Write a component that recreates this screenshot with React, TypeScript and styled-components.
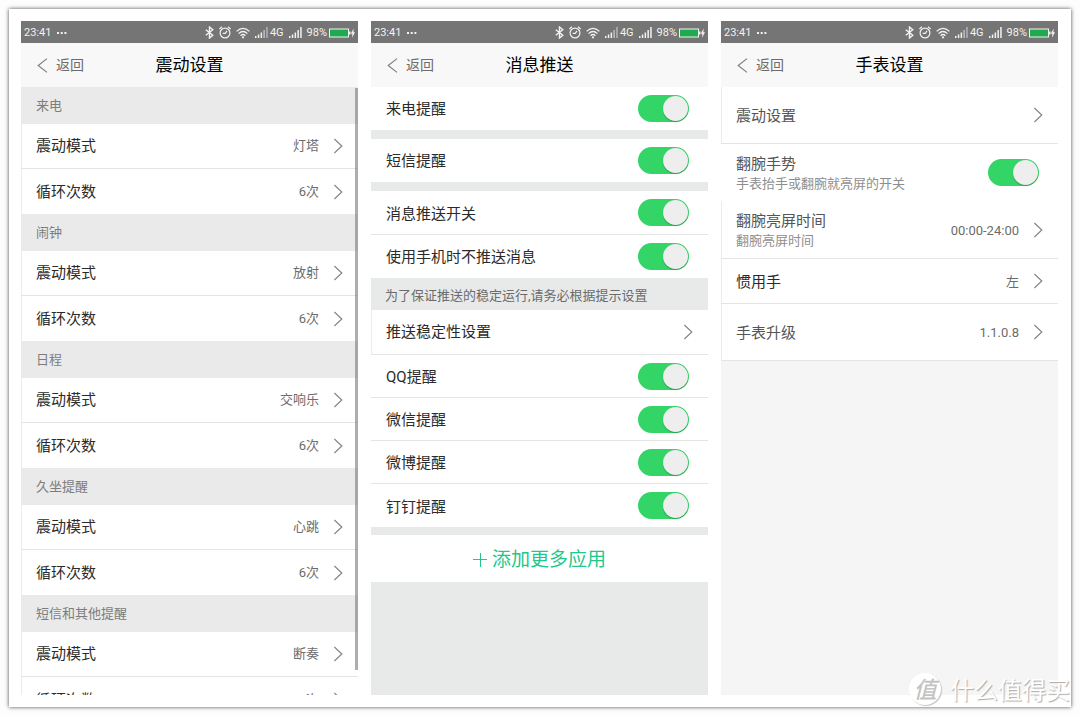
import React from "react";
import styled, { createGlobalStyle, css } from "styled-components";

const GlobalStyle = createGlobalStyle`
  *, *::before, *::after { box-sizing: border-box; }
  body {
    margin: 0;
    background: #fdfdfd;
    font-family: Roboto, "Noto Sans CJK SC", sans-serif;
    color: #2b2b2b;
  }
  button {
    font: inherit;
    color: inherit;
    background: none;
    border: 0;
    padding: 0;
    text-align: left;
    cursor: pointer;
  }
  h1, h2, p { margin: 0; font-weight: 400; }
`;

const Page = styled.div`
  height: 100vh;
  padding: 9px;
`;

const Frame = styled.div`
  position: relative;
  height: 100%;
  padding: 12px 13px 12px 12px;
  display: grid;
  grid-template-columns: repeat(3, minmax(0, 1fr));
  grid-template-rows: minmax(0, 1fr);
  gap: 13px;
  background: #fff;
  box-shadow: 0 0 4px rgba(0, 0, 0, 0.7);
`;

const Phone = styled.section<{ $bg: string }>`
  display: flex;
  flex-direction: column;
  min-height: 0;
  overflow: hidden;
  background: ${(p) => p.$bg};
`;

const StatusBarBox = styled.div`
  flex: none;
  display: flex;
  align-items: center;
  height: 22px;
  padding: 1px 3px 0 3px;
  background: #757575;
  color: #f2f2f2;
  font-size: 11px;
  line-height: 21px;
`;

const StatusIcons = styled.div`
  display: flex;
  align-items: center;
  gap: 5px;
  margin-left: auto;
`;

const Pair = styled.span<{ $gap: number }>`
  display: flex;
  align-items: center;
  gap: ${(p) => p.$gap}px;
`;

const Dots = styled.svg`
  margin-left: 6px;
`;

const HeaderBox = styled.header`
  flex: none;
  display: grid;
  grid-template-columns: 1fr auto 1fr;
  align-items: center;
  height: 44px;
  padding: 0 16px;
  background: #f8f8f8;
`;

const BackButton = styled.button`
  display: flex;
  align-items: center;
  gap: 8px;
  color: #6c6c6c;
  font-size: 14px;
  line-height: 20px;
`;

const Title = styled.h1`
  font-size: 17px;
  line-height: 24px;
  color: #000;
`;

const Body = styled.div`
  position: relative;
  flex: 1;
  min-height: 0;
  overflow: hidden;
`;

const ScrollThumb = styled.div`
  position: absolute;
  top: 1px;
  right: 0;
  bottom: 25px;
  width: 3px;
  background: rgba(130, 130, 130, 0.65);
`;

const SectionTitle = styled.h2`
  height: 37px;
  padding: 0 15px;
  background: #eaeaea;
  color: #7d7d7d;
  font-size: 13px;
  line-height: 37px;
`;

const Notice = styled.p`
  height: 32px;
  padding: 4px 14px 0;
  background: #e8eae9;
  color: #6b6b6b;
  font-size: 13px;
  line-height: 28px;
  white-space: nowrap;
`;

const Band = styled.div<{ $h: number }>`
  height: ${(p) => p.$h}px;
  background: #e8eae9;
`;

const rowBase = css<{ $h: number; $line?: boolean; $boxed?: boolean; $dim?: boolean }>`
  display: flex;
  align-items: center;
  width: 100%;
  height: ${(p) => p.$h}px;
  padding-left: ${(p) => (p.$boxed ? 14 : 15)}px;
  background: #fff;
  color: ${(p) => (p.$dim ? "#555" : "#2b2b2b")};
  border-bottom: ${(p) => (p.$line ? "1px solid #e4e4e4" : "0")};
  border-left: ${(p) => (p.$boxed ? "1px solid #ececec" : "0")};
  font-size: 15px;
  line-height: 20px;
`;

const LinkRowBox = styled.button`
  ${rowBase}
  padding-right: 15px;
`;

const SwitchRowBox = styled.label`
  ${rowBase}
  padding-right: 19px;
  cursor: pointer;
`;

const RowText = styled.span<{ $low?: boolean }>`
  flex: 1;
  display: flex;
  flex-direction: column;
  padding-top: ${(p) => (p.$low ? 2 : 0)}px;
`;

const Sub = styled.small`
  color: #8e8e8e;
  font-size: 13px;
  line-height: 19px;
`;

const Value = styled.span<{ $low?: boolean }>`
  margin-right: 15px;
  padding-top: ${(p) => (p.$low ? 2 : 0)}px;
  color: #6c6c6c;
  font-size: 13px;
`;

const Switch = styled.input`
  appearance: none;
  flex: none;
  display: flex;
  align-items: center;
  justify-content: flex-start;
  width: 51px;
  height: 27px;
  margin: 0;
  padding: 0 1px;
  border-radius: 14px;
  background: #ccc;
  cursor: pointer;

  &::before {
    content: "";
    width: 25px;
    height: 25px;
    border-radius: 50%;
    background: #eeeeee;
    box-shadow: 0 1px 1px rgba(0, 70, 20, 0.35);
  }

  &:checked {
    background: #32d566;
    justify-content: flex-end;
  }
`;

const AddButton = styled.button`
  display: flex;
  align-items: center;
  justify-content: center;
  gap: 5px;
  width: 100%;
  height: 47px;
  padding-top: 2px;
  background: #fff;
  color: #22c78c;
  font-size: 19px;
  line-height: 26px;
`;

const Watermark = styled.div`
  position: absolute;
  right: 1px;
  bottom: 2px;
  display: flex;
  align-items: center;
  gap: 9px;
  color: #fff;
  font-size: 24px;
  line-height: 32px;
  font-family: "Noto Sans CJK SC", sans-serif;
  text-shadow: 1px 1px 1px #aaa;
  pointer-events: none;
`;

const Seal = styled.span`
  width: 32px;
  height: 32px;
  border-radius: 50%;
  background: #fff;
  box-shadow: 1px 1px 1px #c4c4c4;
  color: #c4c4c4;
  font-size: 23px;
  font-style: italic;
  font-weight: 500;
  line-height: 31px;
  text-align: center;
  text-shadow: none;
`;

const Signal = ({ dim }: { dim?: boolean }) => (
  <svg width="13" height="12" viewBox="0 0 13 12" fill="#f2f2f2" aria-hidden="true">
    <rect x="0" y="9" width="1.5" height="2" />
    <rect x="2.8" y="7.5" width="1.5" height="3.5" />
    <rect x="5.6" y="5.5" width="1.5" height="5.5" />
    <rect x="8.4" y="3" width="1.5" height="8" opacity={dim ? 0.6 : 1} />
    <rect x="11.2" y="0" width="1.5" height="11" opacity={dim ? 0.5 : 1} />
  </svg>
);

const StatusBar = () => (
  <StatusBarBox>
    <span>23:41</span>
    <Dots width="10" height="2" viewBox="0 0 10 2" fill="#f2f2f2" aria-hidden="true">
      <rect x="0" width="2" height="2" />
      <rect x="3.7" width="2" height="2" />
      <rect x="7.4" width="2" height="2" />
    </Dots>
    <StatusIcons>
      <svg width="9" height="13" viewBox="0 0 9 13" fill="none" stroke="#f2f2f2" strokeWidth="1.4" aria-hidden="true">
        <path d="M0.8 3.7 L7.8 9.3 L4.5 12 V1 L7.8 3.7 L0.8 9.3" />
      </svg>
      <svg width="12" height="13" viewBox="0 0 12 13" fill="none" stroke="#f2f2f2" strokeWidth="1.2" aria-hidden="true">
        <circle cx="6" cy="7" r="4.9" />
        <path d="M0.4 3 L3 0.8 M11.6 3 L9 0.8 M8 4.8 L6.3 7.4 H3.7" />
      </svg>
      <svg width="14" height="12" viewBox="0 0 14 12" fill="none" stroke="#f2f2f2" strokeWidth="1.3" aria-hidden="true">
        <path d="M0.6 4.4 Q7 -1.6 13.4 4.4 M2.6 6.6 Q7 2.4 11.4 6.6 M4.6 8.7 Q7 6.4 9.4 8.7" />
        <circle cx="7" cy="10.3" r="1.1" fill="#f2f2f2" stroke="none" />
      </svg>
      <Pair $gap={2}>
        <Signal dim />
        <span>4G</span>
      </Pair>
      <Signal />
      <Pair $gap={2}>
        <span>98%</span>
        <svg width="26" height="10" viewBox="0 0 26 10" aria-hidden="true">
          <rect x="0.5" y="1" width="19" height="8" fill="#1faa50" stroke="#f2f2f2" />
          <rect x="20" y="3.5" width="1.5" height="3" fill="#f2f2f2" />
          <path d="M24.6 0.4 L21.8 5.8 H23.4 L23 9.8 L26 4.2 H24.4 Z" fill="#f2f2f2" />
        </svg>
      </Pair>
    </StatusIcons>
  </StatusBarBox>
);

const Header = ({ title }: { title: string }) => (
  <HeaderBox>
    <BackButton type="button">
      <svg width="11" height="15" viewBox="0 0 11 15" fill="none" stroke="#808080" strokeWidth="1.2" aria-hidden="true">
        <path d="M10 0.6 L1.2 7.5 L10 14.4" />
      </svg>
      返回
    </BackButton>
    <Title>{title}</Title>
  </HeaderBox>
);

const Chevron = () => (
  <svg width="9" height="16" viewBox="0 0 9 16" fill="none" stroke="#858585" strokeWidth="1.2" aria-hidden="true">
    <path d="M0.4 1 L7.8 8 L0.4 15" />
  </svg>
);

type RowProps = {
  label: string;
  sub?: string;
  value?: string;
  height: number;
  line?: boolean;
  boxed?: boolean;
  dim?: boolean;
  low?: boolean;
};

const LinkRow = ({ label, sub, value, height, line, boxed, dim, low }: RowProps) => (
  <LinkRowBox type="button" $h={height} $line={line} $boxed={boxed} $dim={dim}>
    <RowText $low={low}>
      {label}
      {sub && <Sub>{sub}</Sub>}
    </RowText>
    {value && <Value $low={low}>{value}</Value>}
    <Chevron />
  </LinkRowBox>
);

const SwitchRow = ({ label, sub, height, line, dim, low }: RowProps) => (
  <SwitchRowBox $h={height} $line={line} $dim={dim}>
    <RowText $low={low}>
      {label}
      {sub && <Sub>{sub}</Sub>}
    </RowText>
    <Switch type="checkbox" defaultChecked />
  </SwitchRowBox>
);

const vibration = [
  { name: "来电", mode: "灯塔", times: "6次" },
  { name: "闹钟", mode: "放射", times: "6次" },
  { name: "日程", mode: "交响乐", times: "6次" },
  { name: "久坐提醒", mode: "心跳", times: "6次" },
  { name: "短信和其他提醒", mode: "断奏", times: "8次" },
];

const apps = ["QQ提醒", "微信提醒", "微博提醒", "钉钉提醒"];

export default function App() {
  return (
    <>
      <GlobalStyle />
      <Page>
        <Frame>
          <Phone $bg="#fff">
            <StatusBar />
            <Header title="震动设置" />
            <Body>
              {vibration.map((v) => (
                <React.Fragment key={v.name}>
                  <SectionTitle>{v.name}</SectionTitle>
                  <LinkRow label="震动模式" value={v.mode} height={45} line boxed />
                  <LinkRow label="循环次数" value={v.times} height={45} boxed />
                </React.Fragment>
              ))}
              <ScrollThumb />
            </Body>
          </Phone>

          <Phone $bg="#e8eae9">
            <StatusBar />
            <Header title="消息推送" />
            <Body>
              <SwitchRow label="来电提醒" height={43} />
              <Band $h={9} />
              <SwitchRow label="短信提醒" height={43} />
              <Band $h={9} />
              <SwitchRow label="消息推送开关" height={44} line low />
              <SwitchRow label="使用手机时不推送消息" height={43} />
              <Notice>为了保证推送的稳定运行,请务必根据提示设置</Notice>
              <LinkRow label="推送稳定性设置" height={45} line boxed />
              {apps.map((name, i) => (
                <SwitchRow key={name} label={name} height={43} line={i < apps.length - 1} low />
              ))}
              <Band $h={8} />
              <AddButton type="button">
                <svg width="14" height="14" viewBox="0 0 14 14" stroke="#22c78c" strokeWidth="1" aria-hidden="true">
                  <path d="M0 6.5 H14 M7.5 0 V14" />
                </svg>
                添加更多应用
              </AddButton>
            </Body>
          </Phone>

          <Phone $bg="#f5f5f5">
            <StatusBar />
            <Header title="手表设置" />
            <Body>
              <LinkRow label="震动设置" height={57} line boxed dim low />
              <SwitchRow label="翻腕手势" sub="手表抬手或翻腕就亮屏的开关" height={57} dim low />
              <LinkRow label="翻腕亮屏时间" sub="翻腕亮屏时间" value="00:00-24:00" height={58} line boxed dim low />
              <LinkRow label="惯用手" value="左" height={45} line boxed low />
              <LinkRow label="手表升级" value="1.1.0.8" height={57} line boxed dim low />
            </Body>
          </Phone>

          <Watermark>
            <Seal>值</Seal>
            什么值得买
          </Watermark>
        </Frame>
      </Page>
    </>
  );
}
